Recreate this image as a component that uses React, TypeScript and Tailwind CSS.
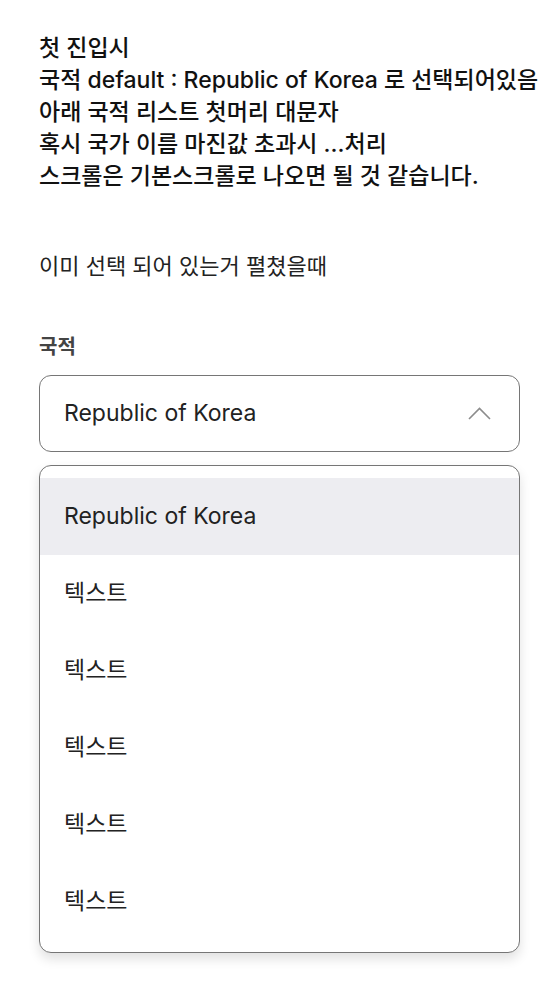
const options = ['Republic of Korea', '텍스트', '텍스트', '텍스트', '텍스트', '텍스트'];

function App() {
  const selected = 'Republic of Korea';

  return (
    <div
      className="min-h-screen bg-white px-[39px] pt-[32px]"
      style={{ fontFamily: "Inter, 'Noto Sans CJK KR', sans-serif" }}
    >
      <div className="text-[23px] leading-[32px] font-medium text-[#111]">
        <p>첫 진입시</p>
        <p className="whitespace-nowrap">국적 default : Republic of Korea 로 선택되어있음</p>
        <p>아래 국적 리스트 첫머리 대문자</p>
        <p>혹시 국가 이름 마진값 초과시 ...처리</p>
        <p>스크롤은 기본스크롤로 나오면 될 것 같습니다.</p>
      </div>

      <p className="mt-[59px] text-[22px] leading-[30px] text-[#222]">이미 선택 되어 있는거 펼쳤을때</p>

      <div className="mt-[52px] w-[481px]">
        <label className="block text-[20px] leading-[28px] font-semibold text-[#444]">국적</label>

        <button
          type="button"
          className="mt-[14px] flex h-[77px] w-full items-center justify-between rounded-[12px] border border-[#767676] bg-white pl-[24px] pr-[28px] text-left"
        >
          <span className="truncate text-[23px] text-[#222]">{selected}</span>
          <svg width="23" height="13" viewBox="0 0 23 13" fill="none" className="shrink-0">
            <polyline points="1,12 11.5,1.5 22,12" stroke="#8c8c8c" strokeWidth="1.6" />
          </svg>
        </button>

        <ul className="mt-[13px] rounded-[12px] border border-[#767676] bg-white py-[12px] shadow-[0_6px_12px_rgba(0,0,0,0.12)]">
          {options.map((opt, i) => (
            <li
              key={i}
              className={`flex h-[77px] items-center px-[24px] text-[23px] text-[#222] ${
                opt === selected ? 'bg-[#ededf1]' : ''
              }`}
            >
              <span className="truncate">{opt}</span>
            </li>
          ))}
        </ul>
      </div>
    </div>
  );
}

export default App;
